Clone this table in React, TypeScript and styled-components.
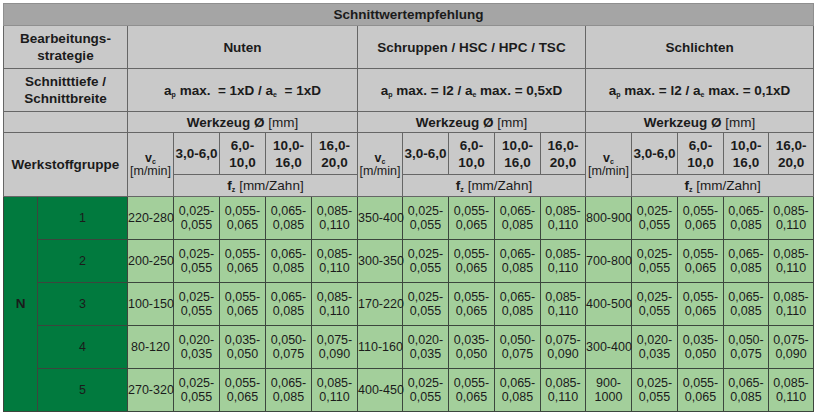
import { Fragment } from 'react'
import styled, { createGlobalStyle } from 'styled-components'

const GlobalStyle = createGlobalStyle`
  body {
    margin: 3px;
    background: #ffffff;
    font-family: 'Liberation Sans', Arial, sans-serif;
    color: #1b1b1b;
  }
`

const COLS = [34, 90, 46, 46, 46, 46, 46, 45, 46, 46, 46, 45, 46, 46, 46, 45, 45]

const A = ['0,025-\n0,055', '0,055-\n0,065', '0,065-\n0,085', '0,085-\n0,110']
const B = ['0,020-\n0,035', '0,035-\n0,050', '0,050-\n0,075', '0,075-\n0,090']

const rows = [
  { group: '1', vc: ['220-280', '350-400', '800-900'], fz: A },
  { group: '2', vc: ['200-250', '300-350', '700-800'], fz: A },
  { group: '3', vc: ['100-150', '170-220', '400-500'], fz: A },
  { group: '4', vc: ['80-120', '110-160', '300-400'], fz: B },
  { group: '5', vc: ['270-320', '400-450', '900-\n1000'], fz: A },
]

const sizes = ['3,0-6,0', '6,0-\n10,0', '10,0-\n16,0', '16,0-\n20,0']

const Table = styled.table`
  border-collapse: collapse;
  table-layout: fixed;
  width: 810px;
  font-family: 'Liberation Sans', Arial, sans-serif;
  color: #1b1b1b;
  border: 1px solid #8f8f8f;
`

const Row = styled.tr<{ $h: number }>`
  height: ${p => p.$h}px;
`

const Title = styled.th`
  background: #a5a5a5;
  border: 1px solid #8f8f8f;
  padding: 0;
  font-size: 13.5px;
  font-weight: bold;
  text-align: center;
`

const Head = styled.th<{ $light?: boolean }>`
  background: #c9c9c9;
  border: 1px solid #666666;
  padding: 0;
  font-size: 13.5px;
  font-weight: ${p => (p.$light ? 'normal' : 'bold')};
  line-height: 17px;
  text-align: center;
  vertical-align: middle;
  white-space: pre;
`

const VcHead = styled(Head)`
  font-size: 12.5px;
  font-weight: normal;
  line-height: 13px;
`

const Regular = styled.span`
  font-weight: normal;
`

const Strong = styled.span`
  font-weight: bold;
`

const Sub = styled.sub`
  font-size: 7px;
  line-height: 0;
  vertical-align: -2px;
`

const Cell = styled.td<{ $tone: 'dark' | 'light' }>`
  background: ${p => (p.$tone === 'dark' ? '#017a3e' : '#a3cf9b')};
  border: 1px solid #3c463d;
  padding: 0;
  font-size: 12.5px;
  line-height: 14px;
  text-align: center;
  vertical-align: middle;
  white-space: pre;
`

const Material = styled(Cell)`
  font-size: 13.5px;
  font-weight: bold;
`

const Depth = ({ p, e }: { p: string; e: string }) => (
  <>
    a<Sub>p</Sub> {p} / a<Sub>e</Sub> {e}
  </>
)

const strategies = [
  { name: 'Nuten', depth: <Depth p={'max.\u00a0 = 1xD'} e={'\u00a0= 1xD'} /> },
  { name: 'Schruppen / HSC / HPC / TSC', depth: <Depth p="max. = l2" e="max. = 0,5xD" /> },
  { name: 'Schlichten', depth: <Depth p="max. = l2" e="max. = 0,1xD" /> },
]

export default function App() {
  return (
    <>
      <GlobalStyle />
      <Table>
        <colgroup>
          {COLS.map((w, i) => (
            <col key={i} style={{ width: w }} />
          ))}
        </colgroup>
        <thead>
          <Row $h={22}>
            <Title colSpan={17}>Schnittwertempfehlung</Title>
          </Row>
          <Row $h={43}>
            <Head colSpan={2}>{'Bearbeitungs-\nstrategie'}</Head>
            {strategies.map(s => (
              <Head key={s.name} colSpan={5}>{s.name}</Head>
            ))}
          </Row>
          <Row $h={43}>
            <Head colSpan={2}>{'Schnitttiefe /\nSchnittbreite'}</Head>
            {strategies.map(s => (
              <Head key={s.name} colSpan={5}>{s.depth}</Head>
            ))}
          </Row>
          <Row $h={21}>
            <Head colSpan={2} />
            {strategies.map(s => (
              <Head key={s.name} colSpan={5}>
                Werkzeug Ø <Regular>[mm]</Regular>
              </Head>
            ))}
          </Row>
          <Row $h={42}>
            <Head colSpan={2} rowSpan={2}>Werkstoffgruppe</Head>
            {strategies.map(s => (
              <Fragment key={s.name}>
                <VcHead rowSpan={2}>
                  <Strong>v<Sub>c</Sub></Strong>
                  {'\n[m/min]'}
                </VcHead>
                {sizes.map(size => (
                  <Head key={size}>{size}</Head>
                ))}
              </Fragment>
            ))}
          </Row>
          <Row $h={22}>
            {strategies.map(s => (
              <Head key={s.name} colSpan={4}>
                f<Sub>z</Sub> <Regular>[mm/Zahn]</Regular>
              </Head>
            ))}
          </Row>
        </thead>
        <tbody>
          {rows.map((r, i) => (
            <Row $h={43} key={r.group}>
              {i === 0 && (
                <Material $tone="dark" rowSpan={rows.length}>
                  N
                </Material>
              )}
              <Cell $tone="dark">{r.group}</Cell>
              {r.vc.map((vc, k) => (
                <Fragment key={k}>
                  <Cell $tone="light">{vc}</Cell>
                  {r.fz.map((fz, j) => (
                    <Cell $tone="light" key={j}>{fz}</Cell>
                  ))}
                </Fragment>
              ))}
            </Row>
          ))}
        </tbody>
      </Table>
    </>
  )
}
